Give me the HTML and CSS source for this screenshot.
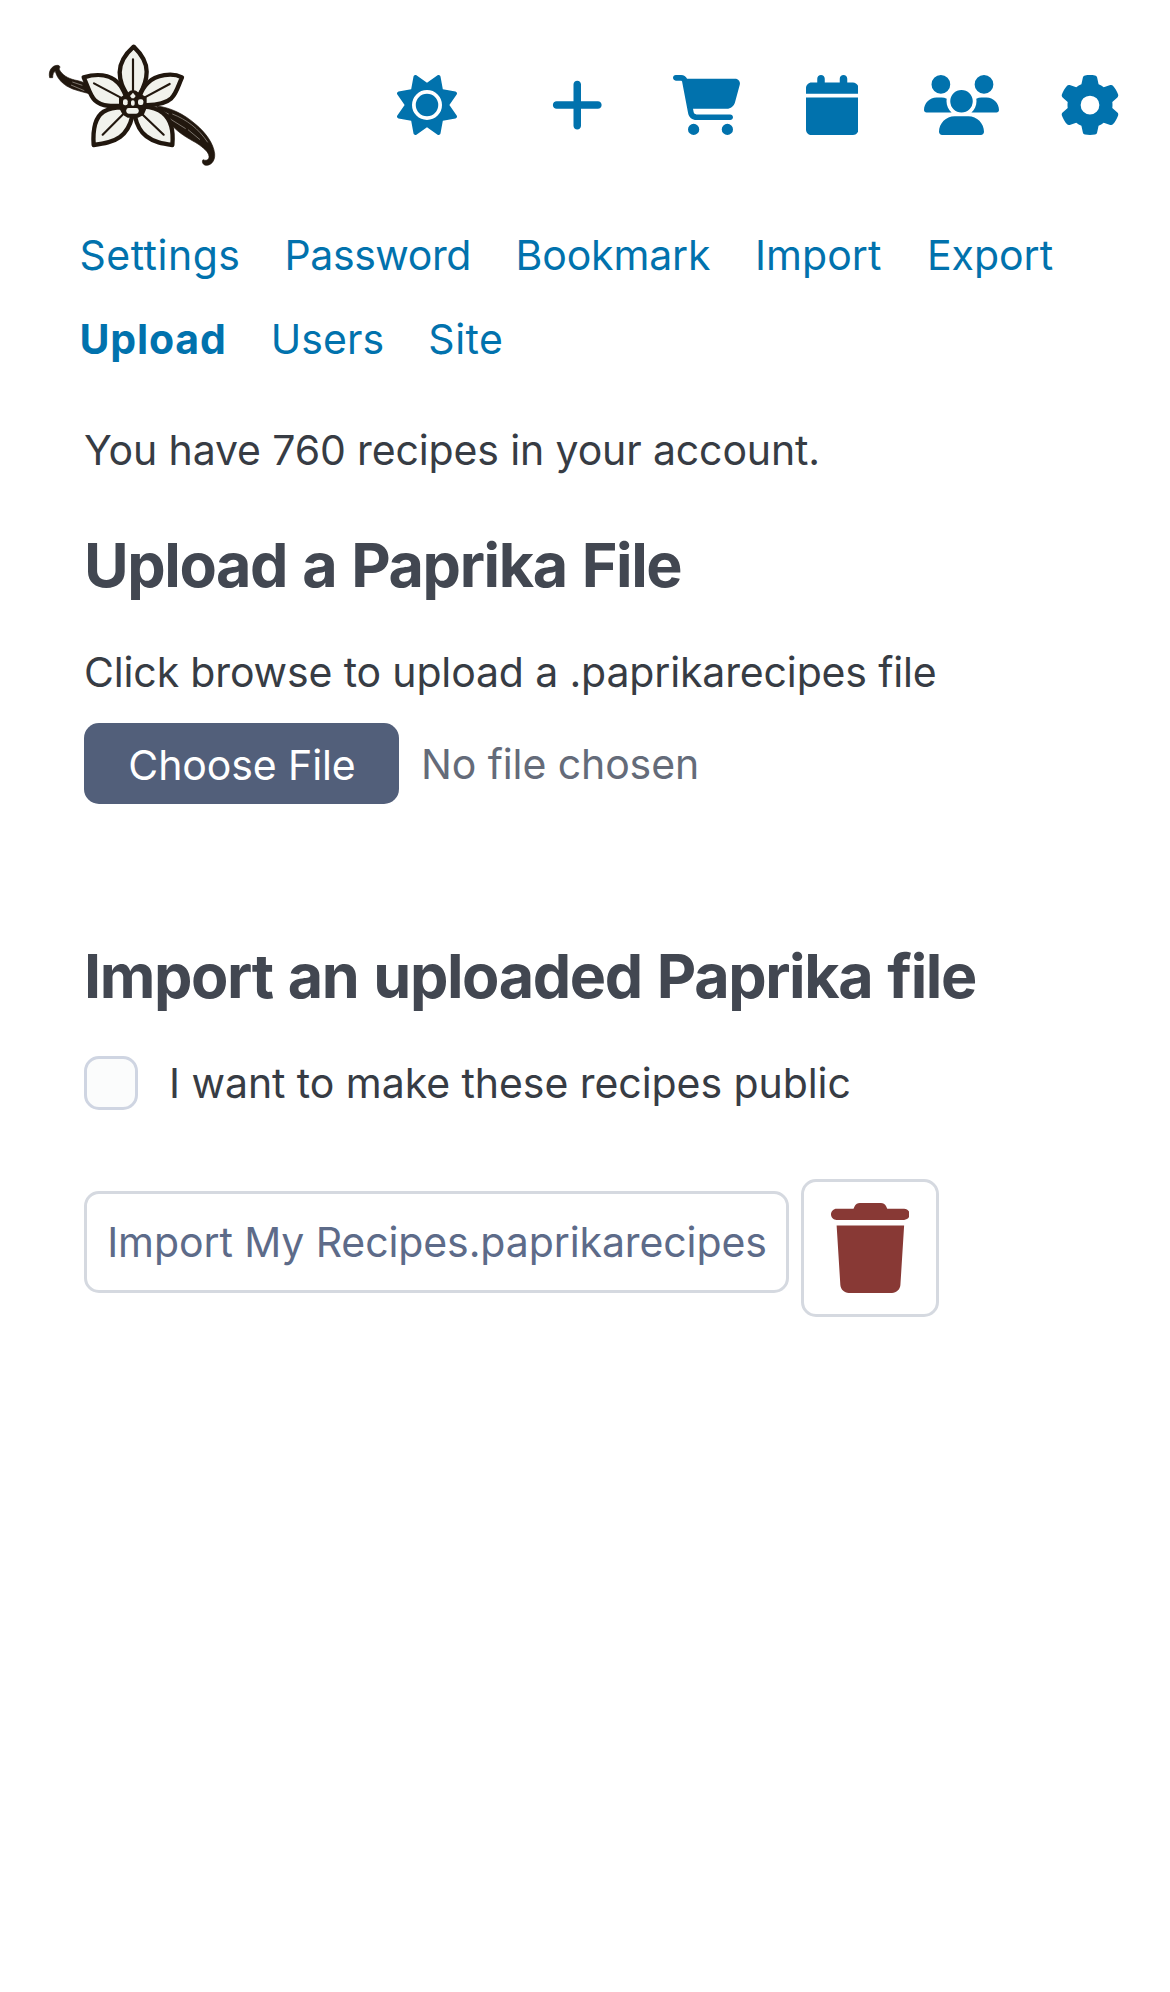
FILE: index.html
```
<!DOCTYPE html>
<html lang="en">
<head>
<meta charset="utf-8">
<title>Upload</title>
<link rel="stylesheet" href="styles.css">
</head>
<body>
<header class="topbar">
  <a class="logo">
    <svg viewBox="0 0 570 420" aria-hidden="true">
      <g fill="#21170e" stroke="#21170e" stroke-linejoin="round">
        <path stroke-width="2" d="M29 128C24 108 36 91 52 91C61 91 61 98 57 102C67 121 84 130 104 135C118 138 132 141 142 148L160 180C134 171 102 167 80 153C61 141 50 125 46 109C40 111 38 119 38 128Z"/>
        <path stroke-width="2" d="M350 213C390 217 432 237 467 268C498 294 520 325 524 356C526 380 511 392 497 391C488 389 485 379 489 374C495 377 508 378 507 364C506 350 488 337 474 327C453 314 428 303 401 277L370 255Z"/>
      </g>
      <g fill="none" stroke="#aaa59d" stroke-width="2">
        <path d="M97 141l30 10M93 150l40 17"/>
        <path d="M370 230l16 7M397 237C440 254 475 280 503 322M386 249L437 281M444 284L480 314"/>
      </g>
      <g fill="#f1f2ec" stroke="#21170e" stroke-width="13" stroke-linejoin="round">
        <path d="M281 35C253 60 239 83 239 112C239 140 249 158 262 180L279 190L298 180C311 158 320 138 320 110C320 82 306 59 281 35Z"/>
        <path d="M131 127C170 115 209 118 234 143C246 155 252 169 258 184L246 212C220 214 187 216 165 196C149 181 145 157 131 127Z"/>
        <path d="M426 127C397 112 348 119 323 144C312 155 304 168 299 184L312 210C343 211 373 209 394 190C410 174 415 151 426 127Z"/>
        <path d="M161 330C158 286 165 247 191 230C207 220 228 217 247 217L277 244C270 274 258 293 240 306C218 322 192 326 161 330Z"/>
        <path d="M397 330C401 288 392 253 369 234C352 221 330 216 311 215L285 244C291 272 302 291 319 304C342 322 368 326 397 330Z"/>
      </g>
      <g fill="none" stroke="#21170e" stroke-linecap="round" stroke-width="6.5">
        <path d="M279 73V165M162 145L241 187M389 147L313 188M188 299L247 240M371 299L309 240"/>
      </g>
      <path fill="#21170e" d="M262 174Q279 156 297 174L320 187V219L311 240L294 248H263L248 239L237 218V190Z"/>
      <g fill="#f1f2ec">
        <path d="M279 173l8 10-5 7h-7l-5-7z"/>
        <rect x="249" y="193" width="14" height="18" rx="6"/>
        <rect x="273" y="196" width="11" height="16" rx="5"/>
        <rect x="294" y="193" width="16" height="17" rx="6"/>
        <rect x="259" y="219" width="37" height="17" rx="7"/>
      </g>
    </svg>
  </a>
  <nav class="icons">
    <a class="icon sun"><svg viewBox="0 0 512 512"><path d="M361.5 1.2c5 2.1 8.6 6.6 9.6 11.9L391 121l107.9 19.8c5.3 1 9.8 4.6 11.9 9.6s1.5 10.7-1.6 15.2L446.9 256l62.3 90.3c3.1 4.5 3.7 10.2 1.6 15.2s-6.6 8.6-11.9 9.6L391 391 371.1 498.9c-1 5.3-4.6 9.8-9.6 11.9s-10.7 1.5-15.2-1.6L256 446.9l-90.3 62.3c-4.5 3.1-10.2 3.7-15.2 1.6s-8.6-6.6-9.6-11.9L121 391 13.1 371.1c-5.3-1-9.8-4.6-11.9-9.6s-1.5-10.7 1.6-15.2L65.1 256 2.8 165.7c-3.1-4.5-3.7-10.2-1.6-15.2s6.6-8.6 11.9-9.6L121 121 140.9 13.1c1-5.3 4.6-9.8 9.6-11.9s10.7-1.5 15.2 1.6L256 65.1 346.3 2.8c4.5-3.1 10.2-3.7 15.2-1.6zM160 256a96 96 0 1 1 192 0 96 96 0 1 1 -192 0zm224 0a128 128 0 1 0 -256 0 128 128 0 1 0 256 0z"/></svg></a>
    <a class="icon plus"><svg viewBox="0 0 448 512"><path d="M256 80c0-17.7-14.3-32-32-32s-32 14.3-32 32V224H48c-17.7 0-32 14.3-32 32s14.3 32 32 32H192V432c0 17.7 14.3 32 32 32s32-14.3 32-32V288H400c17.7 0 32-14.3 32-32s-14.3-32-32-32H256V80z"/></svg></a>
    <a class="icon cart"><svg viewBox="0 0 576 512"><path d="M0 24C0 10.7 10.7 0 24 0H69.5c22 0 41.5 12.8 50.6 32h411c26.3 0 45.5 25 38.6 50.4l-41 152.3c-8.5 31.4-37 53.3-69.5 53.3H170.7l5.4 28.5c2.2 11.3 12.1 19.5 23.6 19.5H488c13.3 0 24 10.7 24 24s-10.7 24-24 24H199.7c-34.6 0-64.3-24.6-70.7-58.5L77.4 54.5c-.7-3.8-4-6.5-7.9-6.5H24C10.7 48 0 37.3 0 24zM128 464a48 48 0 1 1 96 0 48 48 0 1 1 -96 0zm336-48a48 48 0 1 1 0 96 48 48 0 1 1 0-96z"/></svg></a>
    <a class="icon calendar"><svg viewBox="0 0 448 512"><path d="M96 32V64H48C21.5 64 0 85.5 0 112v48H448V112c0-26.5-21.5-48-48-48H352V32c0-17.7-14.3-32-32-32s-32 14.3-32 32V64H160V32c0-17.7-14.3-32-32-32S96 14.3 96 32zM448 192H0V464c0 26.5 21.5 48 48 48H400c26.5 0 48-21.5 48-48V192z"/></svg></a>
    <a class="icon users"><svg viewBox="0 0 640 512"><path d="M144 0a80 80 0 1 1 0 160A80 80 0 1 1 144 0zM512 0a80 80 0 1 1 0 160A80 80 0 1 1 512 0zM0 298.7C0 239.8 47.8 192 106.7 192h42.7c15.9 0 31 3.5 44.6 9.7c-1.3 7.2-1.9 14.7-1.9 22.3c0 38.2 16.8 72.5 43.3 96c-.2 0-.4 0-.7 0H21.3C9.6 320 0 310.4 0 298.7zM405.3 320c-.2 0-.4 0-.7 0c26.6-23.5 43.3-57.8 43.3-96c0-7.6-.7-15-1.9-22.3c13.6-6.3 28.7-9.7 44.6-9.7h42.7C592.2 192 640 239.8 640 298.7c0 11.8-9.6 21.3-21.3 21.3H405.3zM224 224a96 96 0 1 1 192 0 96 96 0 1 1 -192 0zM128 485.3C128 411.7 187.7 352 261.3 352H378.7C452.3 352 512 411.7 512 485.3c0 14.7-11.9 26.7-26.7 26.7H154.7c-14.7 0-26.7-11.9-26.7-26.7z"/></svg></a>
    <a class="icon gear"><svg viewBox="0 0 512 512"><path d="M495.9 166.6c3.2 8.7 .5 18.4-6.4 24.6l-43.3 39.4c1.1 8.3 1.7 16.8 1.7 25.4s-.6 17.1-1.7 25.4l43.3 39.4c6.9 6.2 9.6 15.9 6.4 24.6c-4.4 11.9-9.7 23.3-15.8 34.3l-4.7 8.1c-6.6 11-14 21.4-22.1 31.2c-5.9 7.2-15.7 9.6-24.5 6.8l-55.7-17.7c-13.4 10.3-28.2 18.9-44 25.4l-12.5 57.1c-2 9.1-9 16.3-18.2 17.8c-13.8 2.3-28 3.5-42.5 3.5s-28.7-1.2-42.5-3.5c-9.2-1.5-16.2-8.7-18.2-17.8l-12.5-57.1c-15.8-6.5-30.6-15.1-44-25.4L83.1 425.9c-8.8 2.8-18.6 .3-24.5-6.8c-8.1-9.8-15.5-20.2-22.1-31.2l-4.7-8.1c-6.1-11-11.4-22.4-15.8-34.3c-3.2-8.7-.5-18.4 6.4-24.6l43.3-39.4C64.6 273.1 64 264.6 64 256s.6-17.1 1.7-25.4L22.4 191.2c-6.9-6.2-9.6-15.9-6.4-24.6c4.4-11.9 9.7-23.3 15.8-34.3l4.7-8.1c6.6-11 14-21.4 22.1-31.2c5.9-7.2 15.7-9.6 24.5-6.8l55.7 17.7c13.4-10.3 28.2-18.9 44-25.4l12.5-57.1c2-9.1 9-16.3 18.2-17.8C227.3 1.2 241.5 0 256 0s28.7 1.2 42.5 3.5c9.2 1.5 16.2 8.7 18.2 17.8l12.5 57.1c15.8 6.5 30.6 15.1 44 25.4l55.7-17.7c8.8-2.8 18.6-.3 24.5 6.8c8.1 9.8 15.5 20.2 22.1 31.2l4.7 8.1c6.1 11 11.4 22.4 15.8 34.3zM256 336a80 80 0 1 0 0-160 80 80 0 1 0 0 160z"/></svg></a>
  </nav>
</header>
<nav class="tabs">
  <a class="tab settings">Settings</a>
  <a class="tab password">Password</a>
  <a class="tab bookmark">Bookmark</a>
  <a class="tab import">Import</a>
  <a class="tab export">Export</a>
  <a class="tab upload active">Upload</a>
  <a class="tab users-tab">Users</a>
  <a class="tab site">Site</a>
</nav>
<main class="content">
  <p class="count">You have 760 recipes in your account.</p>
  <h2 class="title">Upload a Paprika File</h2>
  <p class="hint">Click browse to upload a .paprikarecipes file</p>
  <div class="file">
    <button class="choose" type="button">Choose File</button>
    <span class="chosen">No file chosen</span>
  </div>
  <h2 class="title second">Import an uploaded Paprika file</h2>
  <label class="public"><input class="check" type="checkbox"><span class="public-text">I want to make these recipes public</span></label>
  <div class="actions">
    <button class="outline import-file" type="button">Import My Recipes.paprikarecipes</button>
    <button class="outline trash" type="button" aria-label="Delete"><svg viewBox="0 0 448 512"><path d="M135.2 17.7L128 32H32C14.3 32 0 46.3 0 64S14.3 96 32 96H416c17.7 0 32-14.3 32-32s-14.3-32-32-32H320l-7.2-14.3C307.4 6.8 296.3 0 284.2 0H163.8c-12.1 0-23.2 6.8-28.6 17.7zM416 128H32L53.2 467c1.6 25.3 22.6 45 47.9 45H346.9c25.3 0 46.3-19.7 47.9-45L416 128z"/></svg></button>
  </div>
</main>
</body>
</html>
```
FILE: styles.css
```
* { box-sizing: border-box; }

body {
  margin: 0;
  min-height: 1992px;
  background: #fff;
  color: #373c44;
  font: 41px/63px Inter, "Liberation Sans", sans-serif;
}

p, h2 { margin: 0; }
button { font: inherit; margin: 0; }
svg { display: block; }

.topbar {
  display: flex;
  justify-content: space-between;
  height: 224px;
  padding: 35px 50px 0 40px;
}

.logo svg { width: 190px; height: 140px; }

.icons { display: flex; padding-top: 40px; color: #0172ad; }
.icon svg { height: 60px; fill: currentColor; }
.plus { margin-left: 93.5px; }
.cart { margin-left: 69.5px; }
.calendar, .users { margin-left: 65.5px; }
.gear { margin-left: 61.5px; }

.tabs {
  display: flex;
  flex-wrap: wrap;
  gap: 21px 44px;
  padding: 0 60px 0 79.5px;
  color: #0172ad;
}

.active { font-weight: 700; }
.settings { letter-spacing: 0.5px; }
.password { letter-spacing: -0.4px; margin-right: 0.5px; }
.bookmark { letter-spacing: -0.14px; margin-right: 0.5px; }
.import { letter-spacing: 0.06px; margin-right: 1.5px; }
.upload { letter-spacing: 0.84px; }
.users-tab { letter-spacing: 0.1px; }
.site { letter-spacing: 0.5px; }

.content { padding: 48px 84px 0; }
.count { letter-spacing: -0.13px; }

.title {
  margin: 47px 0 39px;
  color: #424751;
  font-size: 61px;
  font-weight: 700;
  line-height: 73px;
  letter-spacing: -1.4px;
  word-spacing: 2px;
}

.hint { letter-spacing: -0.15px; }

.file { display: flex; align-items: center; gap: 22px; margin-top: 19px; }

.choose {
  width: 315px;
  height: 81px;
  padding: 3px 0 0 1px;
  border: 0;
  border-radius: 15px;
  background: #525f7a;
  color: #fff;
  letter-spacing: -0.1px;
}

.chosen { padding-top: 2px; color: #646b79; letter-spacing: -0.1px; }

.second { margin: 136px 0 37px; }

.public { display: flex; align-items: center; gap: 31px; letter-spacing: -0.06px; }
.public-text { padding-top: 2px; }

.check {
  appearance: none;
  width: 54px;
  height: 54px;
  margin: 0;
  border: 3px solid #cfd5e2;
  border-radius: 15px;
  background: #fbfcfc;
}

.actions { display: flex; align-items: flex-start; gap: 12px; margin-top: 64px; }

.outline {
  border: 3px solid #d5d9e0;
  border-radius: 15px;
  background: transparent;
  color: #5d6b89;
}

.import-file {
  width: 705px;
  height: 102px;
  margin-top: 12px;
  padding: 0 0 0 1px;
  letter-spacing: -0.1px;
  white-space: nowrap;
}

.trash {
  display: flex;
  align-items: center;
  justify-content: center;
  width: 138px;
  height: 138px;
  padding: 0;
}

.trash svg { height: 90px; fill: #883935; }
```
